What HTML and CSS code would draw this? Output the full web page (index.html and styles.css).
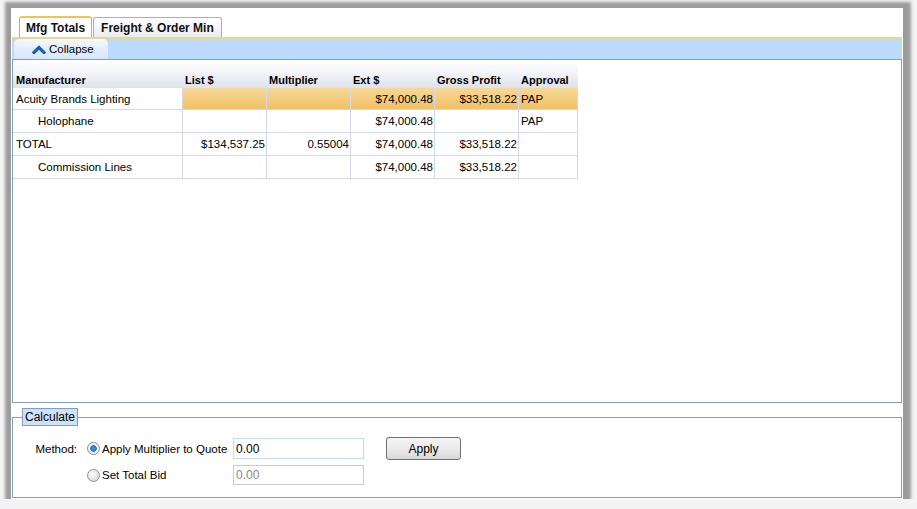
FILE: index.html
```html
<!DOCTYPE html>
<html lang="en">
  <head>
    <meta charset="UTF-8" />
    <title>Mfg Totals</title>
    <link rel="stylesheet" href="styles.css">
  </head>
  <body>
    <div class="window">
      <div class="tabs">
        <div class="tab active">Mfg Totals</div>
        <div class="tab">Freight &amp; Order Min</div>
      </div>
      <div class="toolbar">
        <button class="collapse" type="button">
          <svg width="14" height="10" viewBox="0 0 14 10">
            <polyline points="2,8.5 7,3.5 12,8.5" fill="none" stroke="#1d5fae" stroke-width="3.2" stroke-linecap="square" />
          </svg>
          Collapse
        </button>
      </div>
      <div class="grid-panel">
        <table class="totals">
          <colgroup>
            <col class="c-mfr" />
            <col class="c-num" />
            <col class="c-num" />
            <col class="c-num" />
            <col class="c-num" />
            <col class="c-appr" />
          </colgroup>
          <thead>
            <tr>
              <th>Manufacturer</th>
              <th>List $</th>
              <th>Multiplier</th>
              <th>Ext $</th>
              <th>Gross Profit</th>
              <th>Approval</th>
            </tr>
          </thead>
          <tbody>
            <tr class="hl">
              <td>Acuity Brands Lighting</td>
              <td class="num"></td>
              <td class="num"></td>
              <td class="num">$74,000.48</td>
              <td class="num">$33,518.22</td>
              <td>PAP</td>
            </tr>
            <tr>
              <td class="sub">Holophane</td>
              <td class="num"></td>
              <td class="num"></td>
              <td class="num">$74,000.48</td>
              <td class="num"></td>
              <td>PAP</td>
            </tr>
            <tr>
              <td>TOTAL</td>
              <td class="num">$134,537.25</td>
              <td class="num">0.55004</td>
              <td class="num">$74,000.48</td>
              <td class="num">$33,518.22</td>
              <td></td>
            </tr>
            <tr>
              <td class="sub">Commission Lines</td>
              <td class="num"></td>
              <td class="num"></td>
              <td class="num">$74,000.48</td>
              <td class="num">$33,518.22</td>
              <td></td>
            </tr>
          </tbody>
        </table>
      </div>
      <div class="calc">
        <div class="calc-title">Calculate</div>
        <div class="calc-form">
          <span class="label">Method:</span>
          <label class="option"><input type="radio" name="method" checked /> Apply Multiplier to Quote</label>
          <input class="field" type="text" value="0.00" />
          <button class="apply" type="button">Apply</button>

          <span></span>
          <label class="option"><input type="radio" name="method" /> Set Total Bid</label>
          <input class="field" type="text" value="0.00" disabled />
        </div>
      </div>
    </div>
  </body>
</html>
```

FILE: styles.css
```css
html {
  background: #f4f4f4;
}
body {
  margin: 0;
  padding-top: 8px;
  font-family: "Liberation Sans", Arial, sans-serif;
  font-size: 11px;
  color: #000;
}

.window {
  width: 892px;
  height: 491px;
  margin-left: 11px;
  padding: 0 1px 1px;
  box-sizing: border-box;
  background: #ffffff;
  box-shadow: 1px 1px 3px 7px #9c9c9c;
  display: flex;
  flex-direction: column;
  overflow: hidden;
}

/* tabs */
.tabs {
  display: flex;
  align-items: flex-end;
  flex: none;
  height: 21px;
  padding-top: 8px;
  padding-left: 7px;
}
.tab {
  height: 19px;
  padding: 0 7px;
  display: flex;
  align-items: center;
  border: 1px solid #a7b0ba;
  border-bottom: 0;
  border-radius: 3px 3px 0 0;
  background: linear-gradient(#ffffff, #ececec);
  font-weight: bold;
  font-size: 12px;
  color: #111;
  margin-right: 1px;
}
.tab.active {
  border-top: 2px solid #f2c24e;
  background: #ffffff;
  padding: 0 6px;
}

.toolbar {
  flex: none;
  border-top: 2px solid #e4d98e;
  background: #bcdbfc;
  height: 20px;
  padding-left: 2px;
  display: flex;
}
.collapse {
  width: 94px;
  height: 20px;
  margin: 0;
  padding: 0 0 0 18px;
  border: 0;
  border-radius: 5px 5px 0 0;
  background: linear-gradient(#f6f9fe, #e3eefc 50%, #d6e7fc);
  font-family: "Liberation Sans", Arial, sans-serif;
  font-size: 11.5px;
  color: #000;
  display: flex;
  align-items: center;
  gap: 3px;
}

/* grid */
.grid-panel {
  flex: none;
  height: 344px;
  border: 1px solid #7f9dc8;
  box-sizing: border-box;
}
.totals {
  width: 565px;
  table-layout: fixed;
  border-collapse: separate;
  border-spacing: 0;
}
.c-mfr {
  width: 170px;
}
.c-num {
  width: 84px;
}
.c-appr {
  width: 59px;
}
.totals th {
  height: 28px;
  padding: 0 2px 2px;
  box-sizing: border-box;
  vertical-align: bottom;
  text-align: left;
  font-size: 11px;
  background: linear-gradient(#ffffff, #f2f4f8 45%, #dde2ec);
  white-space: nowrap;
}
.totals th:first-child {
  padding-left: 3px;
}
.totals td {
  height: 23px;
  padding: 0 2px;
  box-sizing: border-box;
  border-right: 1px solid #d4d8ee;
  border-bottom: 1px solid #d4d8ee;
  font-size: 11.5px;
  white-space: nowrap;
  overflow: hidden;
}
.totals td:first-child {
  padding-left: 3px;
}
.totals td.sub {
  padding-left: 25px;
}
.totals td.num {
  text-align: right;
  padding-right: 1px;
}
.totals tr.hl td {
  height: 22px;
}
.totals tr.hl td + td {
  background: linear-gradient(#f7d896, #f1c066);
}

/* calculate box */
.calc {
  flex: 1;
  margin-top: 14px;
  border: 1px solid #7f9dc8;
  display: flex;
  flex-direction: column;
  align-items: flex-start;
}
.calc-title {
  margin: -10px 0 0 9px;
  padding: 0 2px;
  height: 18px;
  box-sizing: border-box;
  border: 1px solid #7f9dc8;
  background: #cde1fa;
  font-size: 12px;
  line-height: 16px;
}
.calc-form {
  display: grid;
  grid-template-columns: 64px 136px 131px 75px;
  grid-template-rows: 21px 20px;
  column-gap: 10px;
  row-gap: 6px;
  align-items: center;
  margin-top: 12px;
  font-size: 11.5px;
}
.calc-form .label {
  text-align: right;
}
.option {
  display: flex;
  align-items: center;
  gap: 2px;
  white-space: nowrap;
}
.option input {
  appearance: none;
  flex: none;
  width: 13px;
  height: 13px;
  margin: 0;
  border: 1px solid #8e8f8f;
  border-radius: 50%;
  background: radial-gradient(circle at 40% 35%, #ffffff, #dcdcdc 70%, #c8c8c8);
}
.option input:checked {
  background: radial-gradient(circle, #3a9be0 0, #1b79c6 3px, #e8e8e8 3.5px, #f4f4f4 5px, #d4d4d4);
}
.field {
  width: 131px;
  height: 21px;
  margin: 0;
  padding: 0 2px;
  box-sizing: border-box;
  border: 1px solid #c0dcf6;
  font-family: "Liberation Sans", Arial, sans-serif;
  font-size: 12px;
  color: #000;
}
.field:disabled {
  height: 20px;
  border-color: #cccccc;
  background: #ffffff;
  color: #8a8a8a;
}
.apply {
  width: 75px;
  height: 23px;
  margin: 0 0 0 12px;
  border: 1px solid #707070;
  border-radius: 3px;
  background: linear-gradient(#f4f4f4, #ebebeb 50%, #d8d8d8);
  font-family: "Liberation Sans", Arial, sans-serif;
  font-size: 12px;
  color: #000;
}
```
